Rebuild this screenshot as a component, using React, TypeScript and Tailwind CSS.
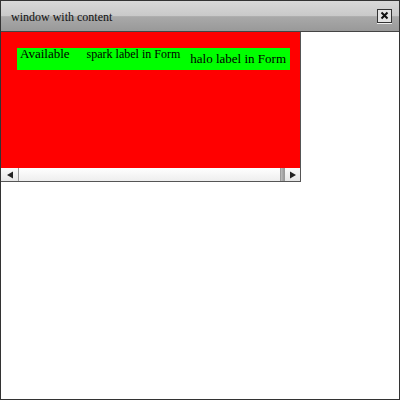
const serif = "font-['Liberation_Serif',serif]"

const App = () => {
    return (
        <div className="w-[400px] h-[400px] bg-white">
            <div className="w-[400px] h-[400px] border border-[#333] flex flex-col">
                {/* title bar */}
                <div className="h-[31px] flex items-center justify-between pl-[10px] pr-[7px] border-b border-[#444] bg-[linear-gradient(#d9d9d9,#c9c9c9_50%,#a9a9a9_52%,#999)]">
                    <span className={`${serif} text-[12px] text-[#111] pt-[2px]`}>window with content</span>
                    <div className="flex flex-col">
                        <div className="w-[15px] h-[14px] border border-[#333] bg-[#e3e3e3] flex items-center justify-center">
                            <svg width="9" height="9" viewBox="0 0 9 9">
                                <path d="M1.5 1.5 L7.5 7.5 M7.5 1.5 L1.5 7.5" stroke="#111" strokeWidth="2" />
                            </svg>
                        </div>
                        <div className="h-[1px] bg-[#eee]" />
                    </div>
                </div>
                {/* content */}
                <div className="w-[300px] border-r border-[#555] flex flex-col">
                    <div className="h-[136px] bg-[#ff0000] pt-[16px] pl-[16px]">
                        <div className={`${serif} w-[273px] h-[22px] bg-[#00ff00] flex items-start text-black`}>
                            <span className="text-[13px] leading-[15px] ml-[3px] mt-[-2px]">Available</span>
                            <span className="text-[12px] leading-[14px] ml-[17px] mt-[-1px]">spark label in Form</span>
                            <span className="text-[13px] leading-[15px] ml-auto mr-[4px] mt-[3px]">halo label in Form</span>
                        </div>
                    </div>
                    {/* horizontal scrollbar */}
                    <div className="h-[14px] flex border-b border-[#555] bg-[linear-gradient(#fff,#eee)]">
                        <div className="w-[18px] border-r border-[#999] flex items-center justify-center bg-[linear-gradient(#fafafa,#e6e6e6)]">
                            <svg width="8" height="8" viewBox="0 0 8 8"><path d="M1 4 L7 0.5 L7 7.5 Z" fill="#222" /></svg>
                        </div>
                        <div className="flex-1" />
                        <div className="w-[4px] border-l border-[#999] bg-[linear-gradient(90deg,#bbb,#999)]" />
                        <div className="w-[16px] border-l border-[#999] flex items-center justify-center bg-[linear-gradient(#fafafa,#e6e6e6)]">
                            <svg width="8" height="8" viewBox="0 0 8 8"><path d="M7 4 L1 0.5 L1 7.5 Z" fill="#222" /></svg>
                        </div>
                    </div>
                </div>
            </div>
        </div>
    )
}

export default App
